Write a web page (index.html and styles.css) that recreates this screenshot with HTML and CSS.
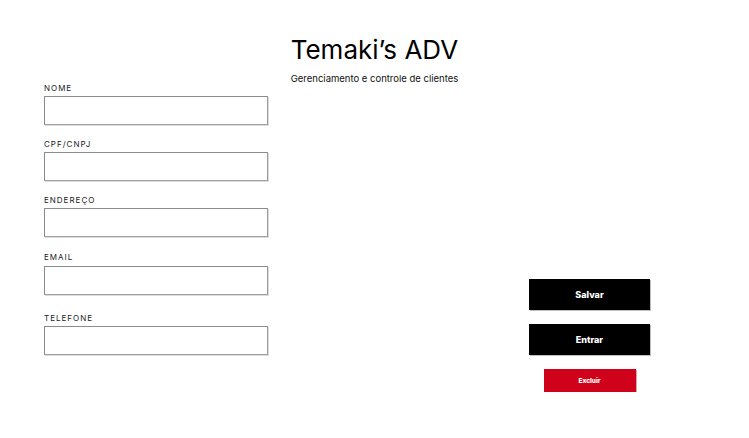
FILE: index.html
```html
<!DOCTYPE html>
<html lang="pt-BR">
<head>
<meta charset="utf-8">
<title>Temaki’s ADV</title>
<link rel="stylesheet" href="styles.css">
</head>
<body>
<header class="header">
  <div class="brand">
    <h1 class="brand-title">Temaki’s ADV</h1>
    <p class="brand-sub">Gerenciamento e controle de clientes</p>
  </div>
</header>
<main class="content">
  <form class="form">
    <div class="field">
      <label class="field-label" for="nome">NOME</label>
      <input class="field-input" id="nome" type="text">
    </div>
    <div class="field">
      <label class="field-label" for="cpf">CPF/CNPJ</label>
      <input class="field-input" id="cpf" type="text">
    </div>
    <div class="field field-3">
      <label class="field-label" for="end">ENDEREÇO</label>
      <input class="field-input" id="end" type="text">
    </div>
    <div class="field field-4">
      <label class="field-label" for="email">EMAIL</label>
      <input class="field-input" id="email" type="text">
    </div>
    <div class="field">
      <label class="field-label" for="tel">TELEFONE</label>
      <input class="field-input" id="tel" type="text">
    </div>
  </form>
  <div class="actions">
    <button class="btn btn-dark" type="button">Salvar</button>
    <button class="btn btn-dark" type="button">Entrar</button>
    <button class="btn btn-red" type="button">Excluir</button>
  </div>
</main>
</body>
</html>
```

FILE: styles.css
```css
* { box-sizing: border-box; }
html, body { margin: 0; padding: 0; background: #fff; }
body {
  width: 749px;
  font-family: "Inter", "Noto Sans", sans-serif;
  color: #111;
}
.header {
  display: flex;
  justify-content: center;
  padding-top: 34px;
}
.brand { display: flex; flex-direction: column; }
.brand-title {
  margin: 0;
  font-size: 26px;
  font-weight: 400;
  line-height: 31px;
  color: #000;
}
.brand-sub {
  margin: 8px 0 0;
  font-size: 9.5px;
  line-height: 12px;
  color: #111;
}
.content {
  display: flex;
  justify-content: space-between;
  margin-top: -2px;
  padding: 0 99px 0 44px;
}
.form { display: flex; flex-direction: column; width: 224px; }
.field { display: flex; flex-direction: column; margin-bottom: 14px; }
.field-3 { margin-bottom: 15px; }
.field-4 { margin-bottom: 18px; }
.field-4 .field-label { margin-bottom: 4px; }
.field-label {
  font-size: 8px;
  line-height: 10px;
  letter-spacing: 1px;
  color: #222;
  margin-bottom: 3px;
}
.field-input {
  width: 224px;
  height: 29px;
  margin: 0;
  padding: 0 4px;
  border: 1px solid #8b8b8b;
  border-right-color: #9a9a9a;
  border-bottom-color: #a0a0a0;
  box-shadow: 1px 1px 0 #dcdcdc;
  background: #fff;
  outline: none;
}
.actions {
  display: flex;
  flex-direction: column;
  align-items: center;
  width: 121px;
  padding-top: 196px;
}
.btn {
  font-family: "Inter", "Noto Sans", sans-serif;
  font-weight: 800;
  color: #fff;
  border: none;
  cursor: pointer;
}
.btn-dark {
  width: 121px;
  height: 31px;
  background: #000;
  font-size: 9px;
  margin-bottom: 14px;
  box-shadow: 1px 1px 0 #bdbdbd;
}
.btn-red {
  width: 92px;
  height: 23px;
  background: #d0021b;
  font-size: 6.5px;
  box-shadow: 1px 1px 0 #e6a0a8;
}
```
